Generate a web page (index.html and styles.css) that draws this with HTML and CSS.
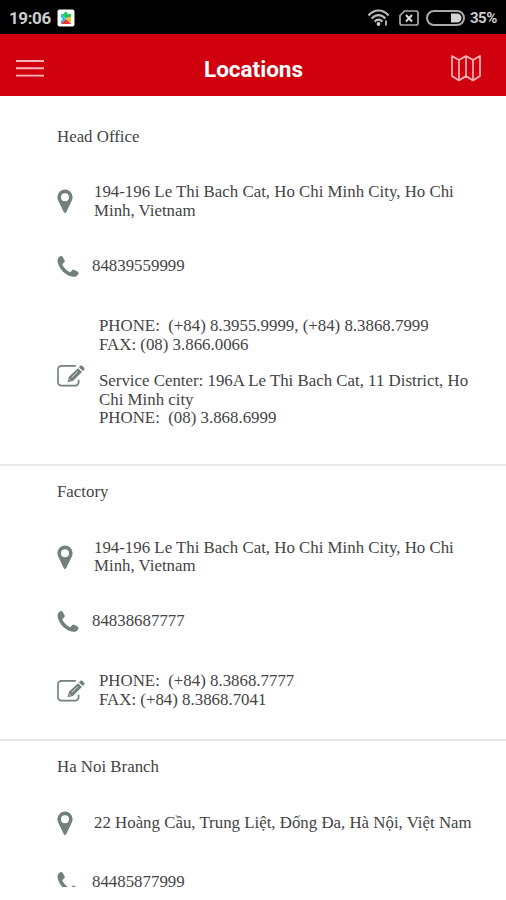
FILE: index.html
```html
<!DOCTYPE html>
<html lang="en">
<head>
  <meta charset="UTF-8">
  <title>Locations</title>
  <link rel="stylesheet" href="styles.css">
</head>
<body>
  <svg class="sprite" width="0" height="0">
    <symbol id="pin" viewBox="0 0 16 25">
      <path fill-rule="evenodd" d="M8 .5a7.6 7.6 0 0 1 7.6 7.6c0 1.500-.3 2.500-.8 3.500L9.200 23.300c-.5 1-1.900 1-2.400 0L1.200 11.600C.7 10.600.4 9.600.4 8.100A7.600 7.600 0 0 1 8 .5zM8 4.300a4 4 0 1 0 0 8 4 4 0 0 0 0-8z"/>
    </symbol>
    <symbol id="phone" viewBox="0 0 23 24">
      <path d="M3.500 1.200C4.500.8 5.300.8 5.900 1.700l2 3.700c.5 1 .2 1.800-.5 2.500L5.900 9.200c-.4.4-.3.900 0 1.500 1.300 2.600 3.800 5 6.900 6.900.6.400 1.100.4 1.500 0l1.500-1.800c.5-.6 1.200-.8 2-.4l4 2.200c.8.500.9 1.100.6 2-.8 2.300-3 3.400-5.400 3.200C9.500 22.200 1.500 14.300.6 6.500.4 4 1.500 2 3.500 1.200z"/>
    </symbol>
    <symbol id="edit" viewBox="0 0 29 24">
      <path d="M19.500 1.500H4.600A3.600 3.600 0 0 0 1 5.100v13.300A3.600 3.600 0 0 0 4.600 22h14.200a3.600 3.600 0 0 0 3.600-3.600v-2.600" fill="none" stroke="currentColor" stroke-width="1.700"/>
      <path d="M11 18.600l1.400-5.800L21.800 3.900l4 4-9.300 9.200zM22.700 3l1.500-1.500c.6-.6 1.300-.6 1.900 0l2 2c.6.600.6 1.300 0 1.900l-1.400 1.500z"/>
      <path d="M15.200 13.600l6.300-6.200M12.900 15.500l1.400 1.400" fill="none" stroke="#fff" stroke-width=".8"/>
    </symbol>
  </svg>

  <div class="status">
    <span class="time">19:06</span>
    <svg class="app" width="18" height="18" viewBox="0 0 18 18">
      <rect x=".5" y=".5" width="17" height="17" rx="2" fill="#fff"/>
      <path d="M4 5h3c0-3 3.500-3 3.500 0H14v4H8z" fill="#27c768"/>
      <path d="M4 5l5 5-5 5v-3c2-1 2-3 0-4z" fill="#25b9ec"/>
      <path d="M14 8v7l-5-5 2-2z" fill="#f2bd28"/>
      <path d="M4 15l5-5 5 5z" fill="#e5363d"/>
    </svg>
    <svg class="wifi" width="23" height="18" viewBox="0 0 23 18">
      <g fill="none" stroke="#bbb" stroke-width="2.200">
        <path d="M1.500 6.500C7-.2 16-.2 21.500 6.500"/>
        <path d="M4.600 9.600c4-4.700 9.800-4.700 13.800 0"/>
        <path d="M7.600 12.700c2.400-2.700 5.400-2.700 7.800 0"/>
      </g>
      <circle cx="11.500" cy="15" r="1.900" fill="#ccc"/>
      <path d="M19 11.500v5" stroke="#aaa" stroke-width="2"/>
    </svg>
    <svg class="sim" width="20" height="16" viewBox="0 0 20 16">
      <path d="M5.500 1H17a2 2 0 0 1 2 2v10a2 2 0 0 1-2 2H3a2 2 0 0 1-2-2V5.500z" fill="none" stroke="#aaa" stroke-width="1.700"/>
      <path d="M7 5l6 6.500M13 5l-6 6.500" stroke="#ddd" stroke-width="1.900"/>
    </svg>
    <svg class="battery" width="39" height="16" viewBox="0 0 39 16">
      <rect x="1" y="1" width="37" height="14" rx="7" fill="none" stroke="#aaa" stroke-width="2"/>
      <path d="M25 3.500h6a4.500 4.500 0 0 1 0 9h-6z" fill="#d5d5d5"/>
    </svg>
    <span class="percent">35%</span>
  </div>

  <header class="topbar">
    <svg width="28" height="20" viewBox="0 0 28 20">
      <path d="M0 3h28M0 10.300h28M0 17.600h28" stroke="#f8b4b8" stroke-width="1.900"/>
    </svg>
    <h1>Locations</h1>
    <svg width="30" height="28" viewBox="0 0 30 28" fill="none" stroke="#f5b5b8" stroke-width="1.700" stroke-linejoin="round">
      <path d="M1 2l7 4 7-4 7 4 7-4v20l-7 4.500-7-4.500-7 4.500L1 22z"/>
      <path d="M8 6v20.500M15 2v20M22 6v20.500"/>
    </svg>
  </header>

  <main class="list">
    <section class="office">
      <h2>Head Office</h2>
      <div class="row address">
        <svg class="pin"><use href="#pin"/></svg>
        <p>194-196 Le Thi Bach Cat, Ho Chi Minh City, Ho Chi Minh, Vietnam</p>
      </div>
      <div class="row tel">
        <svg class="phone"><use href="#phone"/></svg>
        <p>84839559999</p>
      </div>
      <div class="row notes long">
        <svg class="edit"><use href="#edit"/></svg>
        <p>PHONE:&nbsp; (+84) 8.3955.9999, (+84) 8.3868.7999<br>FAX: (08) 3.866.0066<br><br>Service Center: 196A Le Thi Bach Cat, 11 District, Ho Chi Minh city<br>PHONE:&nbsp; (08) 3.868.6999</p>
      </div>
    </section>

    <section class="office">
      <h2>Factory</h2>
      <div class="row address">
        <svg class="pin"><use href="#pin"/></svg>
        <p>194-196 Le Thi Bach Cat, Ho Chi Minh City, Ho Chi Minh, Vietnam</p>
      </div>
      <div class="row tel">
        <svg class="phone"><use href="#phone"/></svg>
        <p>84838687777</p>
      </div>
      <div class="row notes">
        <svg class="edit"><use href="#edit"/></svg>
        <p>PHONE:&nbsp; (+84) 8.3868.7777<br>FAX: (+84) 8.3868.7041</p>
      </div>
    </section>

    <section class="office">
      <h2>Ha Noi Branch</h2>
      <div class="row address short">
        <svg class="pin"><use href="#pin"/></svg>
        <p>22 Hoàng Cầu, Trung Liệt, Đống Đa, Hà Nội, Việt Nam</p>
      </div>
      <div class="row tel">
        <svg class="phone"><use href="#phone"/></svg>
        <p>84485877999</p>
      </div>
    </section>
  </main>
</body>
</html>
```
FILE: styles.css
```css
* {
  box-sizing: border-box;
}

body {
  margin: 0;
  height: 900px;
  overflow: hidden;
  background: #fff;
  color: #444;
  font-family: "Liberation Serif", serif;
}

svg {
  display: block;
  flex-shrink: 0;
}

.sprite {
  display: none;
}

.status {
  display: flex;
  align-items: center;
  height: 34px;
  padding: 2px 8px 0 9px;
  background: #000;
  color: #ccc;
  font: 700 17px Roboto, sans-serif;
}

.time {
  width: 48px;
  letter-spacing: -0.4px;
}

.wifi {
  margin-left: auto;
}

.sim {
  margin-left: 9px;
}

.battery {
  margin-left: 7px;
}

.percent {
  width: 28px;
  margin-left: 5px;
  font-size: 15px;
  letter-spacing: -0.5px;
}

.topbar {
  display: flex;
  align-items: center;
  justify-content: space-between;
  height: 62px;
  padding: 6px 25px 0 16px;
  background: #d0000f;
}

.topbar h1 {
  margin: 2px 0 0 12px;
  color: #fff;
  font: 700 22.5px Roboto, sans-serif;
}

/* the list stops a little above the screen edge */
.list {
  height: 791px;
  padding-top: 15px;
  overflow: hidden;
}

.office {
  padding: 17px 30px 30px 57px;
  border-bottom: 2px solid #e8e8e8;
  font-size: 16.85px;
  line-height: 18.4px;
}

.office h2 {
  margin: 0;
  font-size: 16.85px;
  font-weight: normal;
}

.office p {
  margin: 0;
}

.row {
  display: flex;
  align-items: center;
}

.row svg {
  fill: #71807d;
  color: #71807d;
}

.address {
  margin: 37px 0 34px;
}

.address.short {
  min-height: 26px;
  margin-top: 34px;
}

.tel {
  height: 24px;
}

.notes {
  margin-top: 39px;
}

/* the first office keeps an empty strip under its notes */
.notes.long {
  height: 117px;
}

.notes.long p {
  align-self: flex-start;
}

.pin {
  width: 16px;
  height: 25px;
  margin-right: 21px;
}

.phone {
  width: 22px;
  height: 23px;
  margin-right: 13px;
}

.edit {
  width: 28px;
  height: 24px;
  margin-right: 14px;
}
```
